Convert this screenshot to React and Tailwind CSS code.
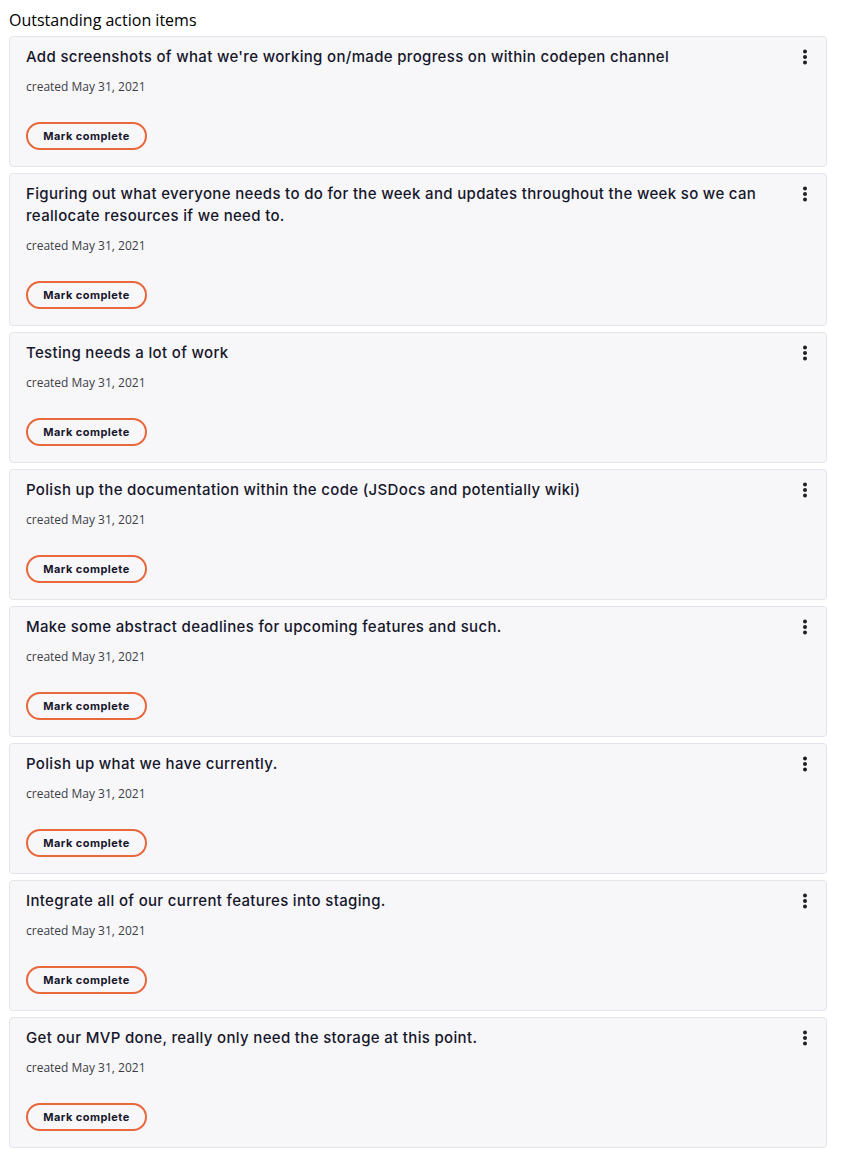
import React from "react";

const items = [
  "Add screenshots of what we're working on/made progress on within codepen channel",
  "Figuring out what everyone needs to do for the week and updates throughout the week so we can reallocate resources if we need to.",
  "Testing needs a lot of work",
  "Polish up the documentation within the code (JSDocs and potentially wiki)",
  "Make some abstract deadlines for upcoming features and such.",
  "Polish up what we have currently.",
  "Integrate all of our current features into staging.",
  "Get our MVP done, really only need the storage at this point.",
];

const KebabIcon = () => (
  <svg width="6" height="16" viewBox="0 0 6 16" fill="#1f1f24">
    <circle cx="3" cy="2.5" r="2" />
    <circle cx="3" cy="8" r="2" />
    <circle cx="3" cy="13.5" r="2" />
  </svg>
);

const ActionItem = ({ title }) => (
  <div className="flex rounded-[4px] border border-[#e3e3ea] bg-[#f7f7fa] pl-4 pr-[18px] pt-[9px] pb-4">
    <div className="flex-1">
      <p className="font-['Inter',sans-serif] text-[15px] font-medium leading-[22px] tracking-[0.33px] text-[#16162a]">
        {title}
      </p>
      <p className="mt-[10px] font-['Open_Sans',sans-serif] text-[12px] leading-[18px] text-[#3d3d45]">
        created May 31, 2021
      </p>
      <button className="mt-[26px] h-[28px] w-[121px] rounded-full border-2 border-[#e8673c] font-['Inter',sans-serif] text-[11px] font-bold tracking-[0.45px] text-[#16162a]">
        Mark complete
      </button>
    </div>
    <div className="pt-[3px] pl-4">
      <KebabIcon />
    </div>
  </div>
);

export default function App() {
  return (
    <div className="min-h-[1173px] bg-white pl-[9px] pr-[17px] pt-[9px]">
      <h2 className="font-['Open_Sans',sans-serif] text-[16px] leading-[22px] text-black">
        Outstanding action items
      </h2>
      <div className="mt-[5px] flex flex-col gap-[6px]">
        {items.map((t) => (
          <ActionItem key={t} title={t} />
        ))}
      </div>
    </div>
  );
}
